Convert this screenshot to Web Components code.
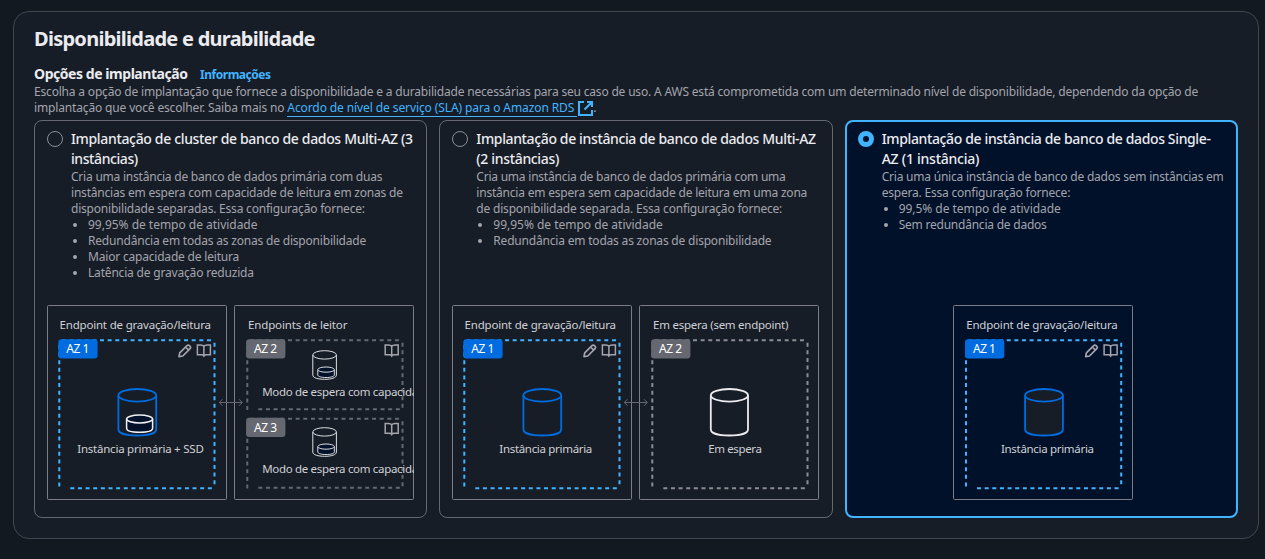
<!DOCTYPE html>
<html lang="pt-BR">
<head>
<meta charset="utf-8">
<title>Disponibilidade e durabilidade</title>
<style>
html{background:#131920}
body{margin:0;height:559px;overflow:hidden;font-family:"Noto Sans","Open Sans",sans-serif;color:#a4a4ad;font-size:12px;line-height:16px}
</style>
</head>
<body>
<rds-availability></rds-availability>
<script>
/* One line of text, tracked so that it occupies the width given in "w". */
class TextLine extends HTMLElement{
  connectedCallback(){
    const root=this.attachShadow({mode:'open'});
    root.innerHTML='<style>:host{display:block;width:max-content;white-space:nowrap}span{display:inline-block}</style><span><slot></slot></span>';
    const w=parseFloat(this.getAttribute('w'));
    if(!w)return;
    const s=root.querySelector('span');
    const n=s.getBoundingClientRect().width;
    s.style.letterSpacing=((w-n)/Math.max(1,this.textContent.length-1)).toFixed(4)+'px';
  }
}
customElements.define('text-line',TextLine);

/* Endpoint diagram box: 180 x 195. */
const side=(x1,y1,x2,y2,c)=>`<path d="M${x1} ${y1}L${x2} ${y2}" stroke="${c}" stroke-width="2" stroke-dasharray="4 3.64"/>`;
const zone=(x,y,h,c)=>side(x+2.5,y,x+154,y,c)+side(x+155.2,y+2.5,x+155.2,y+h-1,c)+side(x+11,y+h,x+154,y+h,c)+side(x,y+4.7,x,y+h+1,c);
const badge=(x,y,t,c)=>`<rect x="${x-1}" y="${y-1}" width="39.3" height="19.3" rx="3" fill="${c}"/><text x="${x+7}" y="${y+13}" textLength="23" class="b">${t}</text>`;
const drum=(x,y,w,h,ry,c,sw,f)=>`<path d="M${x} ${y+ry}V${y+h-ry}C${x} ${y+h-ry/3} ${x+w*.22} ${y+h} ${x+w/2} ${y+h}S${x+w} ${y+h-ry/3} ${x+w} ${y+h-ry}V${y+ry}" fill="${f}" stroke="${c}" stroke-width="${sw}"/><ellipse cx="${x+w/2}" cy="${y+ry}" rx="${w/2}" ry="${ry}" fill="${f}" stroke="${c}" stroke-width="${sw}"/>`;
const book=y=>`<g transform="translate(149.5 ${y})" fill="none" stroke="#a4a4ad" stroke-width="1.5"><path d="M7.4 2.3V12.8M7.4 2.3C6.6 1.2 5.4.9 4.2.9H.9V10.8H5C6.2 10.8 7 11 7.4 11.8C7.8 11 8.6 10.8 9.8 10.8H13.9V.9H10.6C9.4.9 8.2 1.2 7.4 2.3Z"/></g>`;
const pencil=`<g transform="translate(131 39)" fill="none" stroke="#a4a4ad" stroke-width="1.7" stroke-linejoin="round"><path d="M1 12.7L1.7 8.9L9 1.6C9.7.9 10.7.9 11.4 1.6L12.1 2.3C12.8 3 12.8 4 12.1 4.7L4.8 12L1 12.7ZM7.6 3L10.7 6.1"/></g>`;
const label=(x,y,w,t)=>`<text x="${x}" y="${y}" ${w?`textLength="${w}"`:''}>${t}</text>`;
const scenes={
  ssd:()=>label(12.5,24,151.5,'Endpoint de gravação/leitura')+zone(12.3,35.2,148,'#42b4ff')+badge(12.3,35.2,'AZ 1','#006ce0')+pencil+book(39)+drum(71.4,84,37.8,46.5,6.3,'#006ce0',1.8,'#161d26')+drum(79.6,110,26,17.3,4,'#f0f0f4',1.5,'#001129')+label(30.3,148,126.5,'Instância primária + SSD'),
  readers:()=>label(13.3,24,99.3,'Endpoints de leitor')+[0,77].map((d,i)=>{const z=i?78.5:0;
    return zone(12.5,35.2+z,69,'#656871')+badge(12.3,35.2+z,'AZ '+(i+2),'#656871')+book(39+z)+drum(78,45.7+d,23.6,28.6,4.2,'#dedee3',1,'#161d26')+drum(83,62+d,16.5,10.5,2.6,'#dedee3',1,'#001129')+label(27.4,91+d,219.5,'Modo de espera com capacidade de leitura')}).join(''),
  primary:()=>label(12.5,24,151.5,'Endpoint de gravação/leitura')+zone(12.3,35.2,148,'#42b4ff')+badge(12.3,35.2,'AZ 1','#006ce0')+pencil+book(39)+drum(71.4,84,37.8,46.5,6.3,'#006ce0',1.8,'#161d26')+label(47.3,148,93,'Instância primária'),
  standby:()=>label(13.3,24,135.3,'Em espera (sem endpoint)')+zone(12.5,35.2,148,'#8c8c94')+badge(12.3,35.2,'AZ 2','#656871')+drum(71,84,37.2,46.5,6.3,'#ebebf0',1.8,'#161d26')+label(68.4,148,53.7,'Em espera')
};
class EndpointBox extends HTMLElement{
  connectedCallback(){
    this.attachShadow({mode:'open'}).innerHTML=`<style>:host{display:block;width:180px;height:195px;flex:none}:host([kind=readers]),:host([kind=standby]){--dx:.8px}svg{display:block;overflow:hidden}.in{transform:translateX(var(--dx,0px))}text{font-size:11.5px;fill:#d0d0d6;white-space:pre}.b{font-size:12px;fill:#fff}</style><svg width="180" height="195" viewBox="0 0 180 195"><rect x=".5" y=".5" width="179" height="194" rx="1" fill="none" stroke="#7d7d88"/><g class="in">${scenes[this.getAttribute('kind')]()}</g></svg>`;
  }
}
customElements.define('endpoint-box',EndpointBox);

/* Double arrow overlapping the facing edges of two endpoint boxes. */
class LinkArrow extends HTMLElement{
  connectedCallback(){
    this.attachShadow({mode:'open'}).innerHTML=`<style>:host{display:block;width:7px;height:195px;position:relative;flex:none}svg{position:absolute;left:-8px;top:93px}</style><svg width="25" height="9" fill="none" stroke="#656871"><path d="M.3 4.5H23.2M3.5 1.2L.3 4.5L3.5 7.8M20 1.2L23.2 4.5L20 7.8"/></svg>`;
  }
}
customElements.define('link-arrow',LinkArrow);

class DeployTile extends HTMLElement{
  connectedCallback(){
    this.attachShadow({mode:'open'}).innerHTML=`<style>
:host{display:flex;flex-direction:column;box-sizing:border-box;height:398px;border:1px solid #656871;border-radius:8px;padding:8px 0 17px 12px;min-width:0}
:host([selected]){border:2px solid #42b4ff;background:#001129;padding:7px 0 16px 11px;--dx:.7px}
.top{display:flex;gap:8px}
.radio{box-sizing:border-box;width:16px;height:16px;border:1px solid #8c8c94;border-radius:50%;margin-top:2px;flex:none}
:host([selected]) .radio{border:5px solid #42b4ff}
.title{color:#ebebf0;font-size:14px;line-height:20px;font-weight:500}
.diagram{display:flex;margin-top:auto}
:host([selected]) .diagram{margin-left:95.6px}
</style><div class="top"><div class="radio"></div><div><div class="title"><slot name="title"></slot></div><slot></slot></div></div><div class="diagram"><slot name="diagram"></slot></div>`;
  }
}
customElements.define('deploy-tile',DeployTile);

class BulletItem extends HTMLElement{
  connectedCallback(){
    this.attachShadow({mode:'open'}).innerHTML='<style>:host{display:flex;align-items:center;height:16px;padding-left:2px;gap:11px}i{width:4px;height:4px;border-radius:50%;background:#a4a4ad}</style><i></i><slot></slot>';
  }
}
customElements.define('bullet-item',BulletItem);

class RdsAvailability extends HTMLElement{
  connectedCallback(){
    const L=(w,t,s='')=>`<text-line w="${w}" ${s}>${t}</text-line>`;
    const T=(w,t)=>L(w,t,'slot="title"');
    const B=(w,t)=>`<bullet-item>${L(w,t)}</bullet-item>`;
    const D=k=>`<endpoint-box slot="diagram" kind="${k}"></endpoint-box>`;
    const A='<link-arrow slot="diagram"></link-arrow>';
    this.attachShadow({mode:'open'}).innerHTML=`<style>
:host{display:block;padding:11px 6px 0 13px}
.panel{box-sizing:border-box;height:528px;border:1px solid #424650;border-radius:16px;background:#161d26;padding:15px 20px 0}
h2{margin:0;font-size:20px;line-height:24px;color:#ebebf0;font-weight:700}
.label{display:flex;gap:12.5px;align-items:baseline;margin-top:13px;height:20px;line-height:20px;font-size:14px;font-weight:700;color:#ebebf0}
.info{font-size:12px;color:#42b4ff}
.row{display:flex;height:16px}
.link{display:flex;margin-left:3px;color:#42b4ff;box-sizing:border-box;width:290px;height:17px;border-bottom:1px solid #42b4ff}
svg{display:block;margin:1px 0 0 1px}
.tiles{display:grid;grid-template-columns:repeat(3,1fr);gap:12px;width:1204px;margin-top:4px}
</style>
<div class="panel">
<h2>${L(281.5,'Disponibilidade e durabilidade')}</h2>
<div class="label">${L(154,'Opções de implantação')}${L(71,'Informações','class="info"')}</div>
${L(1164.3,'Escolha a opção de implantação que fornece a disponibilidade e a durabilidade necessárias para seu caso de uso. A AWS está comprometida com um determinado nível de disponibilidade, dependendo da opção de')}
<div class="row">${L(250.5,'implantação que você escolher. Saiba mais no')}<div class="link">${L(287,'Acordo de nível de serviço (SLA) para o Amazon RDS')}</div>
<svg width="15" height="15" fill="none" stroke="#42b4ff" stroke-width="2"><path d="M6 1H1V14H14V9M9 1H14V6M14 1L6.5 8.5"/></svg>.</div>
<div class="tiles">
<deploy-tile>${T(342,'Implantação de cluster de banco de dados Multi-AZ (3')}${T(67.2,'instâncias)')}
${L(311.5,'Cria uma instância de banco de dados primária com duas')}${L(332,'instâncias em espera com capacidade de leitura em zonas de')}${L(294,'disponibilidade separadas. Essa configuração fornece:')}
${B(169.5,'99,95% de tempo de atividade')}${B(278.3,'Redundância em todas as zonas de disponibilidade')}${B(151.3,'Maior capacidade de leitura')}${B(166,'Latência de gravação reduzida')}
${D('ssd')}${A}${D('readers')}</deploy-tile>
<deploy-tile>${T(339.7,'Implantação de instância de banco de dados Multi-AZ')}${T(83,'(2 instâncias)')}
${L(309.5,'Cria uma instância de banco de dados primária com uma')}${L(331,'instância em espera sem capacidade de leitura em uma zona')}${L(306,'de disponibilidade separada. Essa configuração fornece:')}
${B(169.5,'99,95% de tempo de atividade')}${B(278.3,'Redundância em todas as zonas de disponibilidade')}
${D('primary')}${A}${D('standby')}</deploy-tile>
<deploy-tile selected>${T(329.3,'Implantação de instância de banco de dados Single-')}${T(97.7,'AZ (1 instância)')}
${L(342.2,'Cria uma única instância de banco de dados sem instâncias em')}${L(188.7,'espera. Essa configuração fornece:')}
${B(162.2,'99,5% de tempo de atividade')}${B(148.2,'Sem redundância de dados')}
${D('primary')}</deploy-tile>
</div></div>`;
  }
}
customElements.define('rds-availability',RdsAvailability);
</script>
</body>
</html>
